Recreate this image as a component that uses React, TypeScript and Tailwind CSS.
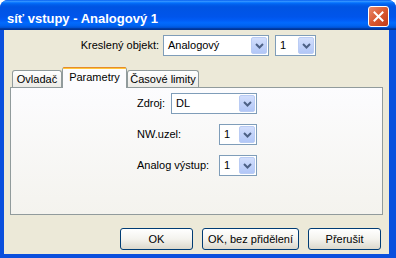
import React from "react";

function Chevron() {
  return (
    <svg width="9" height="6" viewBox="0 0 9 6">
      <polyline points="1,1 4.5,4.5 8,1" fill="none" stroke="#4D6185" strokeWidth="2" />
    </svg>
  );
}

function Combo({ text, w }: { text: string; w: string }) {
  return (
    <div className={`flex h-[21px] ${w} items-center border border-[#7F9DB9] bg-white`}>
      <span className="flex-1 pl-[4px] leading-[13px] whitespace-nowrap">{text}</span>
      <div className="m-[1px] flex h-[17px] w-[16px] items-center justify-center rounded-[2px] border border-[#BACCF4] bg-gradient-to-b from-[#D2DEFC] to-[#B2C7F7]">
        <Chevron />
      </div>
    </div>
  );
}

function Button({ text, w }: { text: string; w: string }) {
  return (
    <div
      className={`flex h-[22px] ${w} items-center justify-center rounded-[3px] border border-[#003C74] bg-gradient-to-b from-[#FFFFFF] via-[#F4F3EE] to-[#DCD8CC]`}
    >
      {text}
    </div>
  );
}

export default function App() {
  return (
    <div
      className="h-[258px] w-[396px] bg-white text-[11px] text-black"
      style={{ fontFamily: '"Liberation Sans", Arial, sans-serif' }}
    >
      <div className="flex h-full flex-col overflow-hidden rounded-t-[8px] bg-[#0A4FDD]">
        {/* Title bar */}
        <div className="flex h-[30px] items-start bg-[linear-gradient(to_bottom,#0058ee_0%,#3593ff_4%,#288eff_6%,#127dff_8%,#036ffc_10%,#0262ee_14%,#0057e5_20%,#0054e3_24%,#0055eb_56%,#005bf5_66%,#026afe_76%,#0062ef_86%,#0052d6_92%,#0040ab_94%,#003092_100%)]">
          <span className="ml-[7px] mt-[11px] text-[13px] font-bold leading-[15px] text-white">
            síť vstupy - Analogový 1
          </span>
          <div className="ml-auto mr-[7px] mt-[6px] flex h-[21px] w-[21px] items-center justify-center rounded-[3px] border border-white bg-gradient-to-br from-[#E8886A] via-[#D9582F] to-[#C23A16]">
            <svg width="11" height="11" viewBox="0 0 11 11">
              <path d="M1.5 1.5 L9.5 9.5 M9.5 1.5 L1.5 9.5" stroke="white" strokeWidth="2" strokeLinecap="square" />
            </svg>
          </div>
        </div>

        {/* Client */}
        <div className="flex flex-1 pb-[4px] pl-[4px] pr-[7px]">
          <div className="flex flex-1 flex-col bg-[#ECE9D8]">
            {/* Row 1 */}
            <div className="mt-[5px] flex items-center">
              <div className="w-[159px] pr-[4px] text-right">Kreslený objekt:</div>
              <Combo text="Analogový" w="w-[106px]" />
              <div className="ml-[6px]">
                <Combo text="1" w="w-[41px]" />
              </div>
            </div>

            {/* Tabs */}
            <div className="ml-[8px] mt-[11px] flex h-[20px] items-end">
              <div className="flex h-[17px] w-[50px] items-center justify-center rounded-t-[3px] border border-b-0 border-[#919B9C] bg-gradient-to-b from-[#FFFFFF] to-[#ECEBE6]">
                Ovladač
              </div>
              <div className="relative z-10 -mb-[1px] flex h-[21px] w-[65px] flex-col rounded-t-[3px] border-x border-[#919B9C] bg-[#FCFCFE]">
                <div className="h-[1px] rounded-t-[3px] bg-[#E68B2C]" />
                <div className="h-[2px] bg-[#FFC73C]" />
                <div className="flex flex-1 items-center justify-center pb-[3px]">Parametry</div>
              </div>
              <div className="flex h-[17px] w-[72px] items-center justify-center rounded-t-[3px] border border-b-0 border-[#919B9C] bg-gradient-to-b from-[#FFFFFF] to-[#ECEBE6]">
                Časové limity
              </div>
            </div>

            {/* Panel */}
            <div className="ml-[6px] mr-[6px] flex h-[128px] flex-col gap-[10px] border border-[#919B9C] bg-gradient-to-b from-[#FCFCFE] to-[#F4F3EE] pl-[126px] pt-[5px]">
              <div className="flex items-center">
                <div className="w-[34px]">Zdroj:</div>
                <Combo text="DL" w="w-[86px]" />
              </div>
              <div className="flex items-center">
                <div className="w-[82px]">NW.uzel:</div>
                <Combo text="1" w="w-[38px]" />
              </div>
              <div className="flex items-center">
                <div className="w-[82px]">Analog výstup:</div>
                <Combo text="1" w="w-[38px]" />
              </div>
            </div>

            {/* Buttons */}
            <div className="mt-[13px] flex justify-end gap-[9px] pr-[8px]">
              <Button text="OK" w="w-[73px]" />
              <Button text="OK, bez přidělení" w="w-[97px]" />
              <Button text="Přerušit" w="w-[73px]" />
            </div>
          </div>
        </div>
      </div>
    </div>
  );
}
